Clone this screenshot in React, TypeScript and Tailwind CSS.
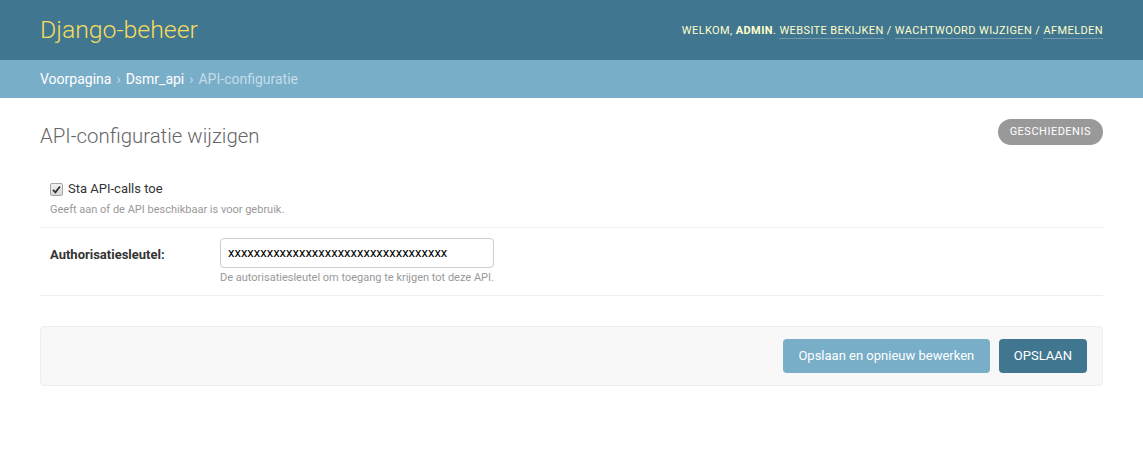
import React from "react";

const font = { fontFamily: "Roboto, 'Liberation Sans', sans-serif" };

function Header() {
  return (
    <header className="flex h-[60px] items-center justify-between bg-[#417690] px-10">
      <div className="text-[24.8px] font-light text-[#f5dd5d]">Django-beheer</div>
      <div className="pt-[2px] text-[11px] uppercase tracking-[0.4px] text-[#ffffcc]">
        Welkom, <strong className="font-bold">admin</strong>.{" "}
        <a className="border-b border-white/25 pb-px">Website bekijken</a> /{" "}
        <a className="border-b border-white/25 pb-px">Wachtwoord wijzigen</a> /{" "}
        <a className="border-b border-white/25 pb-px">Afmelden</a>
      </div>
    </header>
  );
}

function Breadcrumbs() {
  return (
    <div className="flex h-[38px] items-center bg-[#79aec8] px-10 text-[14px] text-[#c4dce8]">
      <a className="text-white">Voorpagina</a>
      <span className="mx-[5px]">›</span>
      <a className="text-white">Dsmr_api</a>
      <span className="mx-[5px]">›</span>
      <span>API-configuratie</span>
    </div>
  );
}

function CheckMark() {
  return (
    <span className="flex h-[13px] w-[13px] items-center justify-center rounded-[2px] border border-[#a5a5a5] bg-gradient-to-b from-[#f2f2f2] to-[#d8d8d8]">
      <svg width="9" height="9" viewBox="0 0 9 9">
        <path d="M1 4.8 L3.4 7.3 L8 1.5" fill="none" stroke="#333" strokeWidth="1.8" />
      </svg>
    </span>
  );
}

export default function App() {
  return (
    <div className="min-h-[450px] bg-white text-[13px] text-[#333]" style={font}>
      <Header />
      <Breadcrumbs />
      <main className="px-10 pt-5">
        <div className="flex items-start justify-between">
          <h1 className="mt-[3px] text-[20.4px] font-light leading-[30px] text-[#666]">
            API-configuratie wijzigen
          </h1>
          <a className="mt-px rounded-full bg-[#999] px-3 py-[6px] text-[11px] font-normal uppercase leading-[14px] tracking-[0.5px] text-white">
            Geschiedenis
          </a>
        </div>

        <div className="mt-[19px]">
          <div className="border-b border-[#eee] p-[10px]">
            <div className="flex items-center gap-[5px] pt-px leading-[16px]">
              <CheckMark />
              <span className="text-[13px] text-[#333]">Sta API-calls toe</span>
            </div>
            <p className="mt-[6px] text-[11px] leading-[14px] text-[#999]">
              Geeft aan of de API beschikbaar is voor gebruik.
            </p>
          </div>
          <div className="flex border-b border-[#eee] p-[10px]">
            <label className="w-[170px] shrink-0 pt-[7px] font-bold text-[#333]">
              Authorisatiesleutel:
            </label>
            <div>
              <div className="flex h-[30px] w-[274px] items-center rounded-[4px] border border-[#ccc] px-[7px] text-[13px] text-black">
                xxxxxxxxxxxxxxxxxxxxxxxxxxxxxxxxxx
              </div>
              <p className="mt-[3px] text-[11px] leading-[14px] text-[#999]">
                De autorisatiesleutel om toegang te krijgen tot deze API.
              </p>
            </div>
          </div>
        </div>

        <div className="mt-[30px] flex justify-end gap-[9px] rounded-[4px] border border-[#eee] bg-[#f8f8f8] px-[15px] py-3">
          <button className="h-[34px] rounded-[4px] bg-[#79aec8] px-[15.5px] text-[13px] text-white">
            Opslaan en opnieuw bewerken
          </button>
          <button className="h-[34px] rounded-[4px] bg-[#417690] px-[15px] text-[13px] uppercase text-white">
            Opslaan
          </button>
        </div>
      </main>
    </div>
  );
}
